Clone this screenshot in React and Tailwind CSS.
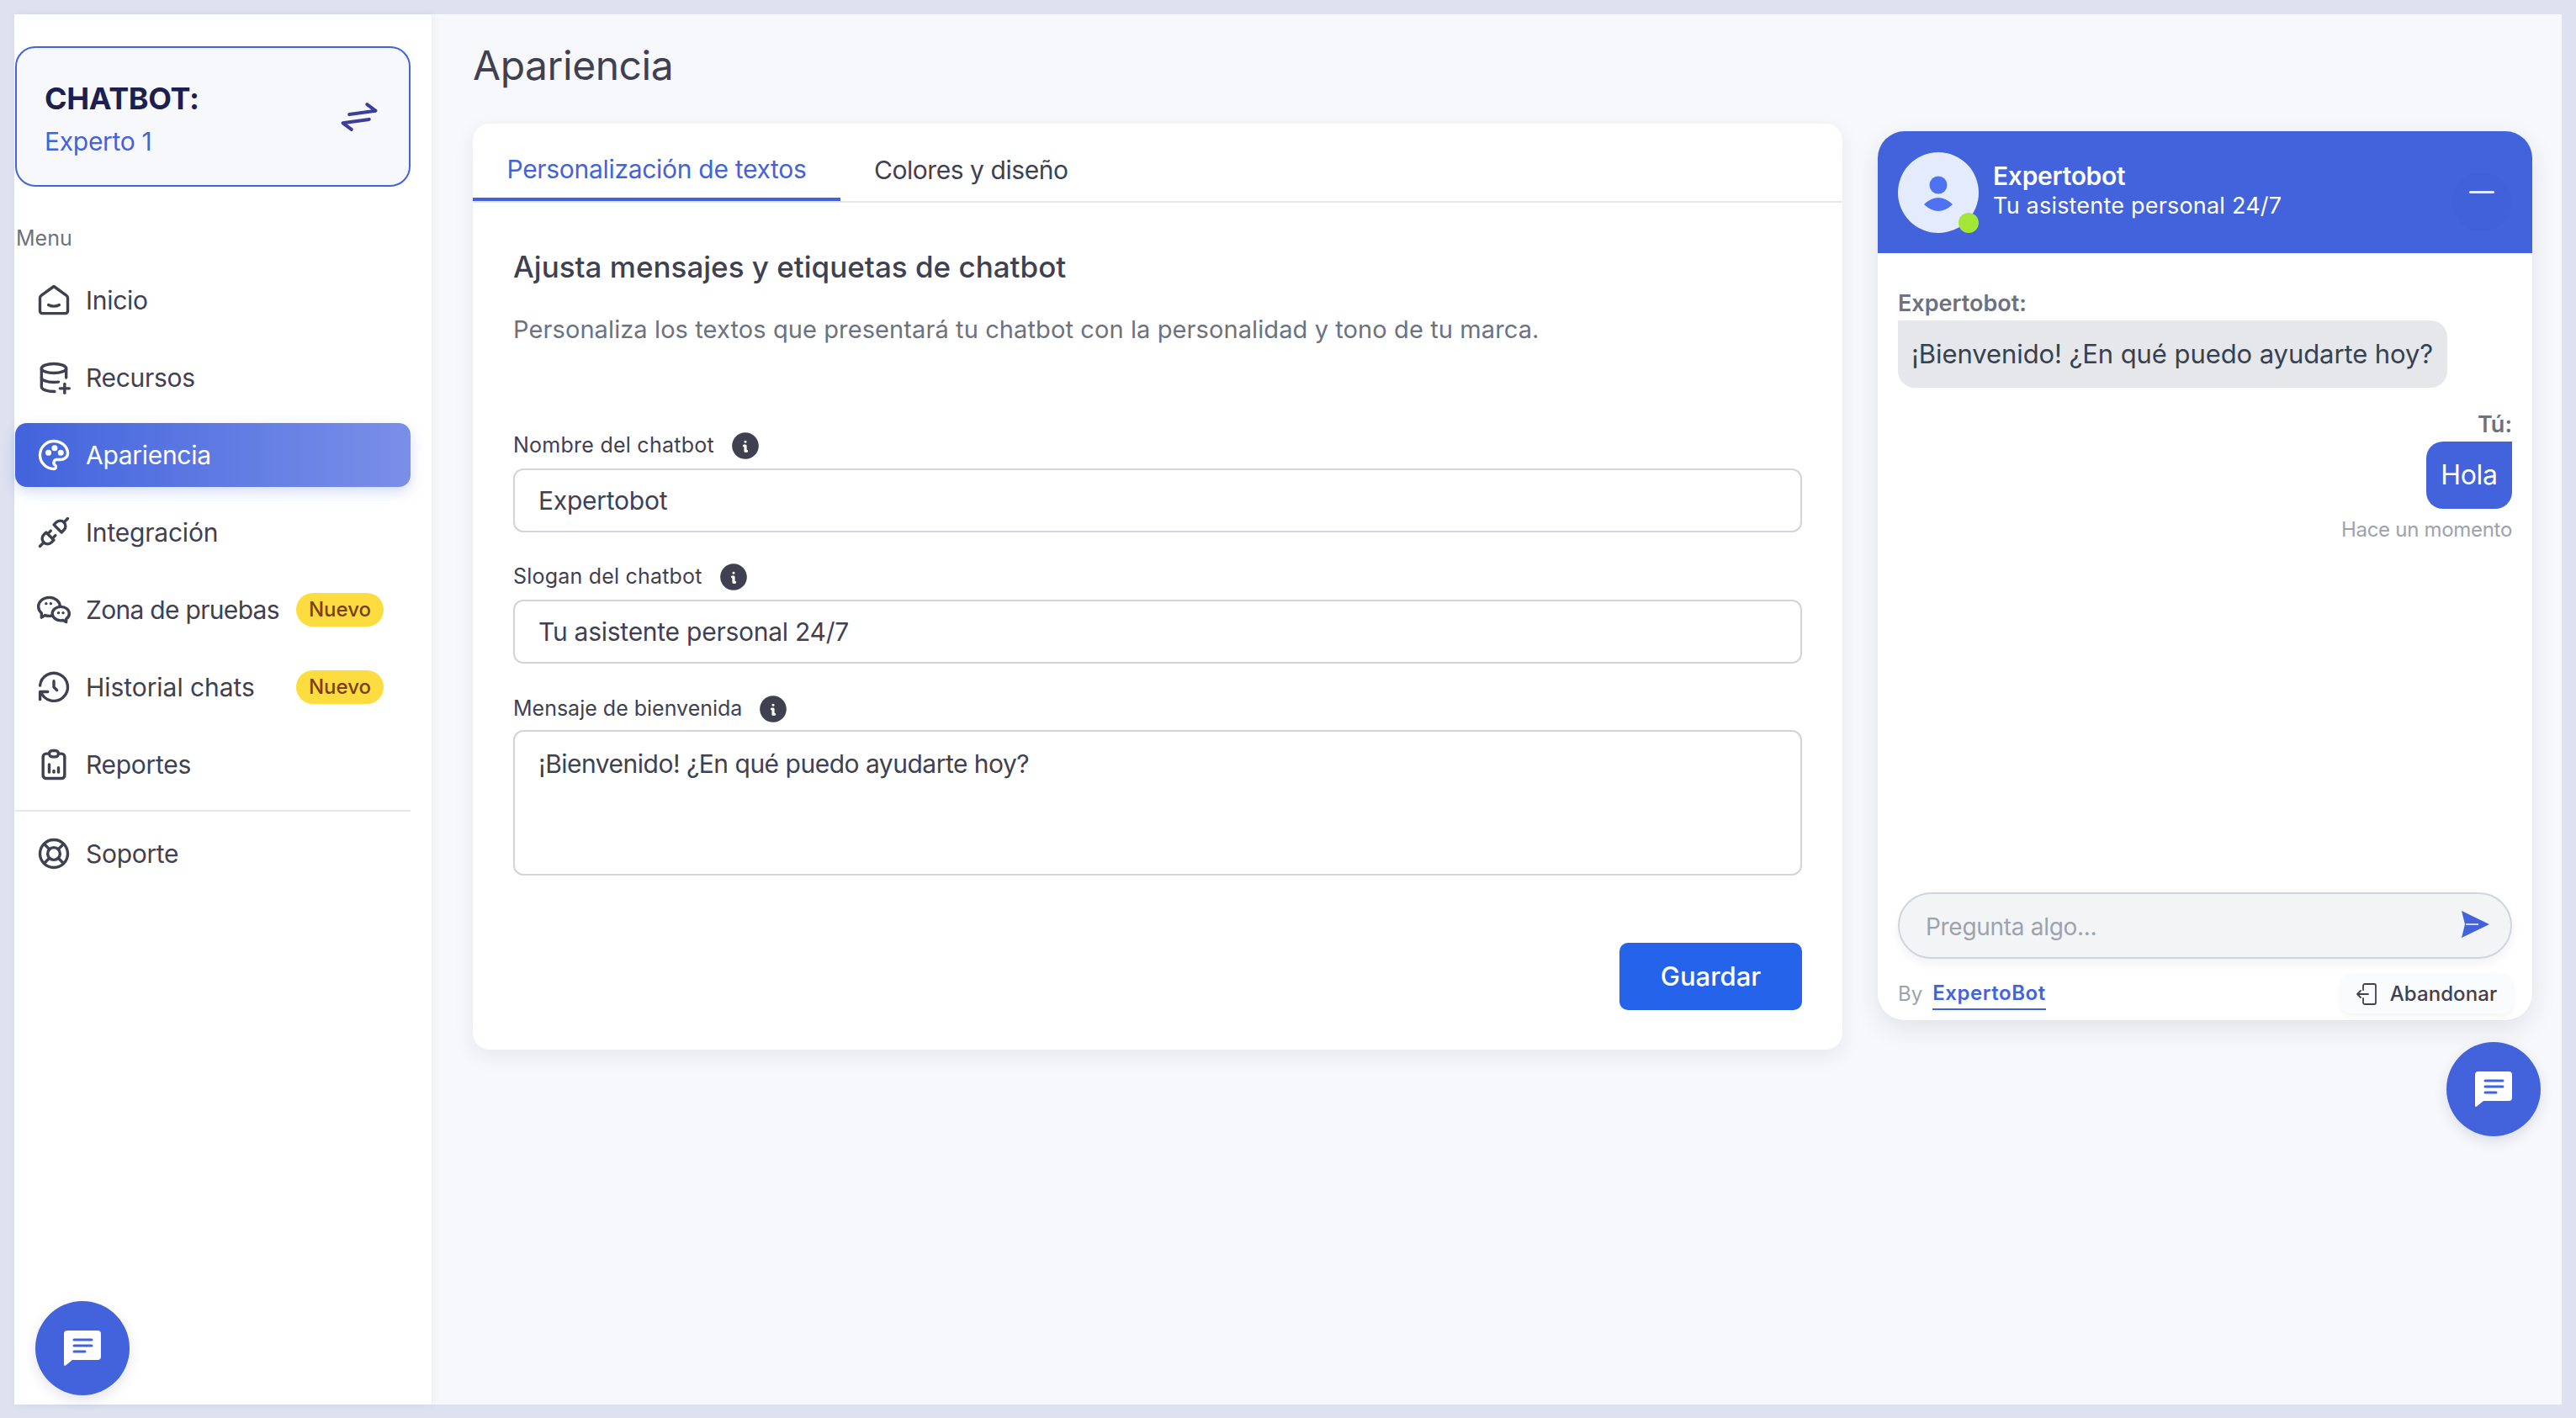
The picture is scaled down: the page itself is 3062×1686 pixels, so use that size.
import {
  TbDatabasePlus,
  TbPalette,
  TbPlugConnected,
  TbBrandWechat,
  TbHistory,
  TbReportAnalytics,
  TbLifebuoy,
  TbArrowsExchange,
  TbInfoCircleFilled,
} from "react-icons/tb";

const HomeIcon = ({ size, strokeWidth, className }) => (
  <svg
    width={size}
    height={size}
    viewBox="0 0 24 24"
    fill="none"
    stroke="currentColor"
    strokeWidth={strokeWidth}
    strokeLinecap="round"
    strokeLinejoin="round"
    className={className}
  >
    <path d="M3 10.5a2 2 0 0 1 .8-1.6L12 3l8.2 5.9a2 2 0 0 1 .8 1.6V19a1.5 1.5 0 0 1-1.5 1.5h-15A1.5 1.5 0 0 1 3 19z" />
    <path d="M8.5 15c2 1.2 5 1.2 7 0" />
  </svg>
);

const menu = [
  { label: "Inicio", icon: HomeIcon, tracking: "tracking-[-0.3px]" },
  { label: "Recursos", icon: TbDatabasePlus, tracking: "tracking-[-0.3px]" },
  { label: "Apariencia", icon: TbPalette, active: true, tracking: "tracking-[-0.3px]" },
  { label: "Integración", icon: TbPlugConnected, tracking: "tracking-[-0.2px]" },
  { label: "Zona de pruebas", icon: TbBrandWechat, badge: true, tracking: "tracking-[-0.7px]" },
  { label: "Historial chats", icon: TbHistory, badge: true, tracking: "tracking-[-0.05px]" },
  { label: "Reportes", icon: TbReportAnalytics, tracking: "tracking-[-0.3px]" },
];

const MenuItem = ({ label, icon: Icon, active, badge, tracking = "tracking-[-0.3px]" }) => (
  <div
    className={`flex h-[76px] items-center rounded-[14px] pl-[24px] ${
      active
        ? "bg-gradient-to-r from-[#4263dc] to-[#7a8fe8] text-white shadow-[0_6px_16px_rgba(66,99,220,0.22)]"
        : "text-[#3f4150]"
    }`}
  >
    <Icon size={44} strokeWidth={1.85} className="shrink-0" />
    <span className={`ml-[16px] min-w-0 flex-1 whitespace-nowrap text-[30px] ${tracking}`}>{label}</span>
    {badge && (
      <span className="mr-[32px] flex h-[40px] w-[104px] shrink-0 items-center justify-center rounded-full bg-[#fddc3f] text-[24px] font-medium text-[#78400f]">
        Nuevo
      </span>
    )}
  </div>
);

const ChatIcon = () => (
  <svg width="44" height="42" viewBox="0 0 44 42">
    <path d="M4 0h36a4 4 0 0 1 4 4v27a4 4 0 0 1-4 4H10l-8 6.5c-1 .7-2 .2-2-1V4a4 4 0 0 1 4-4z" fill="#fff" />
    <path d="M12 11h21M12 18h21M12 25h13" stroke="#4263dc" strokeWidth="3" strokeLinecap="round" />
  </svg>
);

const ChatButton = ({ className }) => (
  <button className={`flex h-[112px] w-[112px] items-center justify-center rounded-full bg-[#4263dc] shadow-[0_6px_16px_rgba(30,40,90,0.12)] ${className}`}>
    <ChatIcon />
  </button>
);

const Label = ({ text, className }) => (
  <div className={`flex h-[32px] items-center gap-[18px] text-[25px] text-[#3f4150] ${className}`}>
    {text}
    <TbInfoCircleFilled size={38} className="text-[#3f4150]" />
  </div>
);

const inputClass =
  "w-full rounded-[12px] border-2 border-[#d1d5db] bg-white px-[28px] text-[30px] text-[#3f4150] outline-none";

export default function App() {
  return (
    <div className="flex h-screen w-full bg-[#dde1f0] pb-[16px] pl-[17px] pr-[17px] pt-[17px] font-[Inter,sans-serif]">
      <aside className="relative z-10 flex w-[496px] shrink-0 flex-col bg-white pl-[1px] pr-[25px] pt-[38px] shadow-[2px_0_10px_rgba(30,40,90,0.05)]">
        <div className="flex h-[167px] items-center justify-between rounded-[24px] border-2 border-[#4263dc] bg-[#f7f8fb] pl-[33px] pr-[32px]">
          <div className="pt-[4px]">
            <div className="text-[36px] font-bold leading-[46px] tracking-[-0.35px] text-[#1c1f4f]">CHATBOT:</div>
            <div className="mt-[8px] text-[30px] leading-[40px] tracking-[-0.3px] text-[#4263dc]">Experto 1</div>
          </div>
          <TbArrowsExchange size={54} strokeWidth={1.8} className="rotate-[-8deg] text-[#3d3d9c]" />
        </div>

        <div className="mt-[43px] h-[36px] pl-[1px] text-[25px] leading-[36px] text-[#6b7280]">Menu</div>

        <nav className="mt-[18px] flex flex-col gap-[16px]">
          {menu.map((item) => (
            <MenuItem key={item.label} {...item} />
          ))}
        </nav>
        <div className="mt-[16px] h-[2px] bg-[#e5e7eb]" />
        <div className="mt-[12px]">
          <MenuItem label="Soporte" icon={TbLifebuoy} />
        </div>

        <ChatButton className="mb-[11px] ml-[24px] mt-auto" />
      </aside>

      <main className="flex min-w-0 flex-1 flex-col bg-[#f7f8fb] pl-[49px] pt-[31px]">
        <h1 className="h-[60px] text-[48px] leading-[60px] tracking-[-0.45px] text-[#3f4150]">Apariencia</h1>

        <div className="mt-[39px] flex items-start gap-[42px]">
          <section className="w-[1628px] shrink-0 rounded-[20px] bg-white shadow-[0_8px_24px_rgba(30,40,90,0.08)]">
            <div className="flex h-[94px] border-b-2 border-[#e5e7eb]">
              <div className="flex h-[92px] w-[437px] items-center justify-center border-b-4 border-[#4263dc] pt-[20px] text-[30px] tracking-[-0.3px] text-[#4263dc]">
                Personalización de textos
              </div>
              <div className="flex h-[92px] items-center px-[40px] pt-[18px] text-[30px] tracking-[-0.45px] text-[#3f4150]">
                Colores y diseño
              </div>
            </div>

            <div className="px-[48px] pb-[47px] pt-[57px]">
              <h2 className="h-[40px] text-[35px] font-medium leading-[38px] text-[#3f4150]">
                Ajusta mensajes y etiquetas de chatbot
              </h2>
              <p className="mt-[34px] h-[40px] text-[29px] leading-[40px] tracking-[0.1px] text-[#6b7280]">
                Personaliza los textos que presentará tu chatbot con la personalidad y tono de tu marca.
              </p>

              <Label text="Nombre del chatbot" className="mt-[102px] tracking-[0.25px]" />
              <input readOnly value="Expertobot" className={`${inputClass} mt-[11px] h-[76px] tracking-[-0.25px]`} />

              <Label text="Slogan del chatbot" className="mt-[37px] tracking-[0.2px]" />
              <input readOnly value="Tu asistente personal 24/7" className={`${inputClass} mt-[11px] h-[76px] tracking-[-0.25px]`} />

              <Label text="Mensaje de bienvenida" className="mt-[38px]" />
              <textarea
                readOnly
                value="¡Bienvenido! ¿En qué puedo ayudarte hoy?"
                className={`${inputClass} mt-[9px] block h-[173px] resize-none pt-[16px] tracking-[-0.5px]`}
              />

              <div className="mt-[80px] flex justify-end">
                <button className="h-[80px] w-[217px] rounded-[10px] bg-[#2563eb] text-[31px] font-medium text-white">
                  Guardar
                </button>
              </div>
            </div>
          </section>

          <div className="flex w-[788px] shrink-0 flex-col items-start pt-[9px]">
            <div className="flex h-[1057px] w-[778px] flex-col overflow-hidden rounded-[32px] bg-white shadow-[0_10px_30px_rgba(30,40,90,0.1)]">
              <header className="flex h-[145px] shrink-0 items-center bg-[#4263dc] pl-[24px] pr-[25px]">
                <div className="relative flex h-[96px] w-[96px] items-center justify-center rounded-full bg-[#e3ebfd]">
                  <svg width="40" height="50" viewBox="0 0 40 50">
                    <circle cx="20" cy="16" r="10.5" fill="#4f73f0" />
                    <path d="M3 39Q20 23 37 39Q20 55 3 39z" fill="#4f73f0" />
                  </svg>
                  <span className="absolute bottom-0 right-0 h-[24px] w-[24px] rounded-full bg-[#a3e635]" />
                </div>
                <div className="ml-[17px] flex-1 pb-[3px] text-white">
                  <div className="text-[30px] font-semibold leading-[36px] tracking-[-0.3px]">Expertobot</div>
                  <div className="text-[27px] leading-[36px] tracking-[0.2px]">Tu asistente personal 24/7</div>
                </div>
                <button className="mt-[22px] flex h-[70px] w-[70px] justify-center rounded-full bg-[#4161da] pt-[22px]">
                  <span className="h-[3px] w-[30px] rounded bg-white/90" />
                </button>
              </header>

              <div className="flex flex-1 flex-col px-[24px] pb-[8px] pt-[42px]">
                <div className="h-[36px] text-[27px] font-semibold leading-[36px] text-[#6b7280]">Expertobot:</div>
                <div className="mt-[2px] flex h-[80px] w-[653px] items-center rounded-[20px] rounded-tl-none bg-[#e5e7eb] pl-[16px] text-[31px] tracking-[-0.08px] text-[#374151]">
                  ¡Bienvenido! ¿En qué puedo ayudarte hoy?
                </div>

                <div className="mt-[26px] h-[36px] text-right text-[27px] font-semibold leading-[36px] text-[#6b7280]">Tú:</div>
                <div className="mt-[2px] flex h-[80px] w-[102px] items-center justify-center self-end rounded-[20px] rounded-tr-none bg-[#4263dc] text-[32px] tracking-[-0.3px] text-white">
                  Hola
                </div>
                <div className="mt-[9px] h-[32px] text-right text-[24px] leading-[32px] tracking-[-0.3px] text-[#9ca3af]">Hace un momento</div>

                <div className="mt-auto flex h-[79px] items-center rounded-full border-2 border-[#d1d5db] bg-[#f3f4f6] pl-[31px] pr-[24px] shadow-[0_6px_12px_rgba(30,40,90,0.06)]">
                  <input
                    readOnly
                    placeholder="Pregunta algo..."
                    className="min-w-0 flex-1 bg-transparent pt-[2px] text-[28px] tracking-[-0.3px] outline-none placeholder:text-[#9ca3af]"
                  />
                  <svg width="35" height="32" viewBox="0 0 35 32" className="mb-[4px]">
                    <path d="M1 0L34 16L1 32L5 16z" fill="#4263dc" />
                    <path d="M6 16H21" stroke="#fff" strokeWidth="1.5" />
                  </svg>
                </div>

                <div className="mt-[18px] flex h-[47px] items-center justify-between">
                  <div className="flex items-center gap-[12px] text-[24px]">
                    <span className="text-[#9ca3af]">By</span>
                    <span className="border-b-2 border-[#4263dc] font-semibold tracking-[0.55px] text-[#4263dc]">ExpertoBot</span>
                  </div>
                  <button className="flex h-[47px] w-[203px] items-center justify-center gap-[15px] rounded-[12px] bg-[#fafbfc] text-[24px] font-medium tracking-[0.1px] text-[#3f4150] shadow-[0_3px_8px_rgba(30,40,90,0.06)]">
                    <svg width="25" height="26" viewBox="0 0 25 26" fill="none" stroke="#3f4150" strokeWidth="1.8" strokeLinecap="round" strokeLinejoin="round">
                      <path d="M8 8V3a2 2 0 0 1 2-2h11a2 2 0 0 1 2 2v20a2 2 0 0 1-2 2H10a2 2 0 0 1-2-2v-5" />
                      <path d="M14 13H1M5 9l-4 4 4 4" />
                    </svg>
                    Abandonar
                  </button>
                </div>
              </div>
            </div>
            <ChatButton className="mt-[26px] self-end" />
          </div>
        </div>
      </main>
    </div>
  );
}
